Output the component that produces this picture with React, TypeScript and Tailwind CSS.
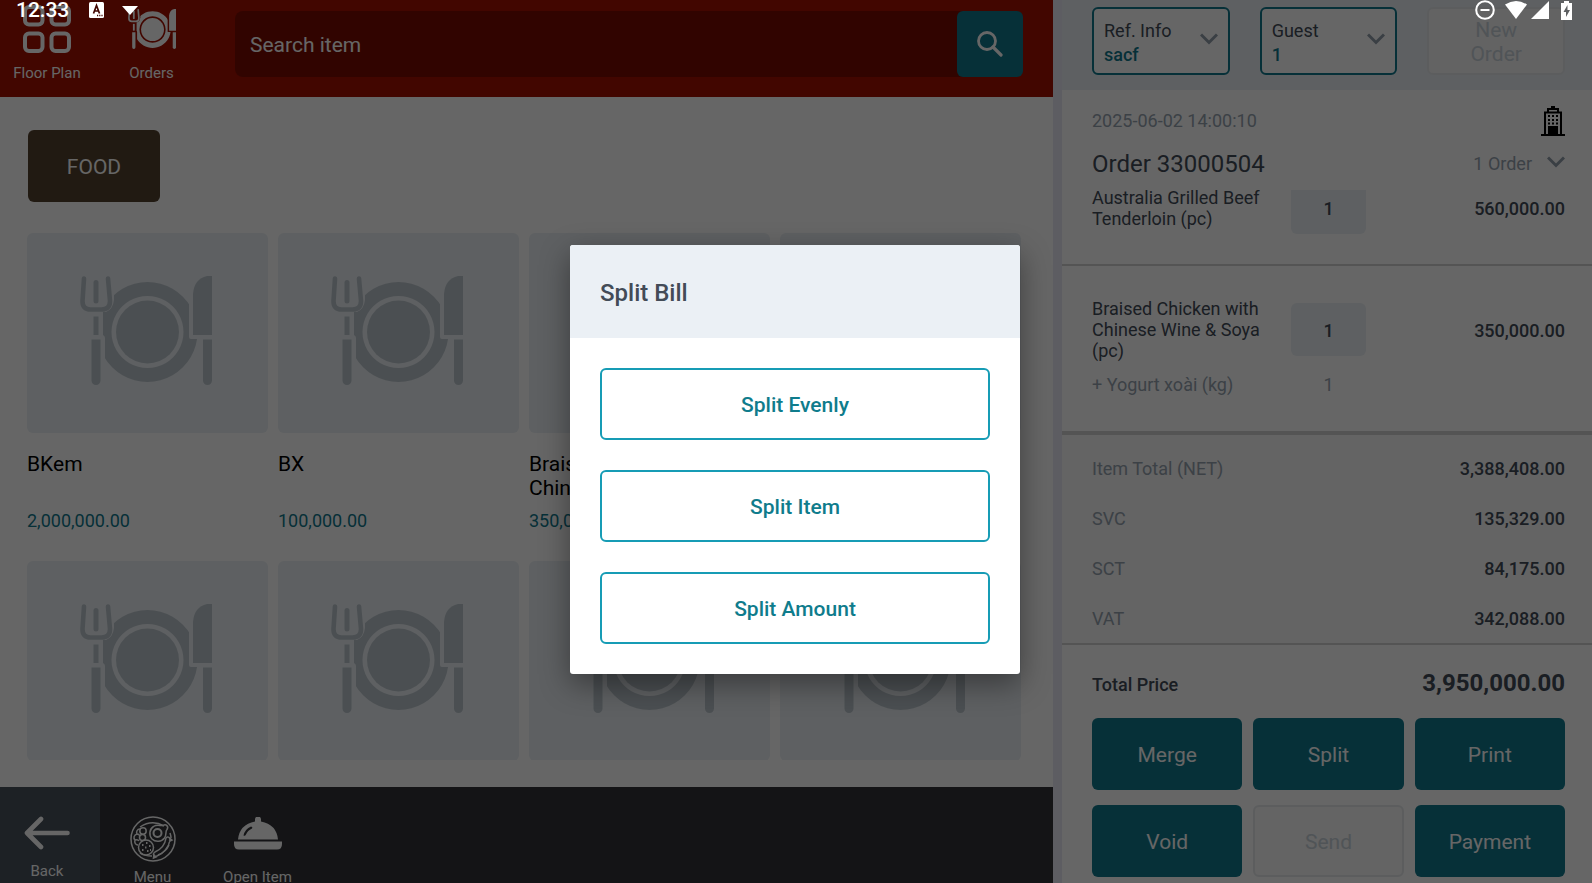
import React, { useState } from "react";

const products = [
    { name: "BKem", price: "2,000,000.00" },
    { name: "BX", price: "100,000.00" },
    { name: "Braised Chicken with Chinese Wine & Soya", price: "350,000.00" },
    { name: "", price: "" },
    { name: "", price: "" },
    { name: "", price: "" },
    { name: "", price: "" },
    { name: "", price: "" },
];

const totals = [
    { label: "Item Total (NET)", value: "3,388,408.00" },
    { label: "SVC", value: "135,329.00" },
    { label: "SCT", value: "84,175.00" },
    { label: "VAT", value: "342,088.00" },
];

const actions = ["Merge", "Split", "Print", "Void", "Send", "Payment"];
const splitOptions = ["Split Evenly", "Split Item", "Split Amount"];

/* ---------- icons ---------- */

function PlateIcon({ className }: { className: string }) {
    return (
        <svg viewBox="0 0 132 109" preserveAspectRatio="none" className={className} fill="currentColor" aria-hidden="true">
            <clipPath id="plate">
                <path d="M34 0V24Q33 33 26 36H23V59Q25 60 25 62V109H132V63H111Q109 63 109 61V0Z" />
            </clipPath>
            <g clipPath="url(#plate)">
                <path
                    fillRule="evenodd"
                    d="M67.500 6a50 50 0 1 0 .01 0ZM67.500 20a36 36 0 1 1 -.01 0Z"
                />
                <circle cx="67.500" cy="56" r="31.500" />
            </g>
            <path
                d="M4 2.500L2.500 25Q2.500 33.500 10.500 33.500H21.500Q30 33.500 30 25L28 2.500"
                fill="none"
                stroke="currentColor"
                strokeWidth="4.600"
                strokeLinecap="round"
            />
            <rect x="13.500" y="4" width="5" height="23.500" rx="2.500" />
            <rect x="13.500" y="40.500" width="5" height="18.500" />
            <path d="M11.500 63.500h9v41a4.500 4.500 0 0 1-9 0Z" />
            <path d="M113 59V18Q114 3 127 0H132V59Z" />
            <path d="M123 63.500h9v41a4.500 4.500 0 0 1-9 0Z" />
        </svg>
    );
}

function FloorPlanIcon() {
    return (
        <svg viewBox="0 0 48 48" className="size-12 shrink-0" fill="none" stroke="currentColor" strokeWidth="4" aria-hidden="true">
            <rect x="2" y="2" width="17.500" height="17.500" rx="4" />
            <rect x="28.500" y="2" width="17.500" height="17.500" rx="4" />
            <rect x="2" y="28.500" width="17.500" height="17.500" rx="4" />
            <rect x="28.500" y="28.500" width="17.500" height="17.500" rx="4" />
        </svg>
    );
}

function SearchIcon() {
    return (
        <svg viewBox="0 0 26 26" className="size-[26px]" fill="none" stroke="currentColor" strokeWidth="2.800" aria-hidden="true">
            <circle cx="10" cy="10" r="8.500" />
            <path d="M16 16l8 8" strokeWidth="3.200" strokeLinecap="round" />
        </svg>
    );
}

function ChevronIcon() {
    return (
        <svg viewBox="0 0 18 16" className="h-4 w-[18px] shrink-0" fill="none" stroke="#929faa" strokeWidth="3" aria-hidden="true">
            <path d="M1 1.500l8 8 8-8" />
        </svg>
    );
}

function BuildingIcon() {
    return (
        <svg viewBox="0 0 24 30" className="h-[30px] w-6" fill="#000" aria-hidden="true">
            <path d="M10 0h4v2h4v4h-2V4H8v2H6V2h4Z" />
            <path fillRule="evenodd" d="M3 5.500h18V28h3v2H0v-2h3ZM5 7.500V28H7v-8h10v8h2V7.500Z" />
            <path d="M11 20h2v9h-2Z" />
            <path d="M7 9h2v2H7zM11 9h2v2h-2zM15 9h2v2h-2zM7 13h2v2H7zM11 13h2v2h-2zM15 13h2v2h-2zM7 16.500h2v2H7zM11 16.500h2v2h-2zM15 16.500h2v2h-2z" />
        </svg>
    );
}

function BackIcon() {
    return (
        <svg viewBox="0 0 46 34" className="h-[34px] w-[46px] shrink-0" fill="none" stroke="currentColor" strokeWidth="4.600" strokeLinecap="round" strokeLinejoin="round" aria-hidden="true">
            <path d="M43.500 17H3M17 3L3 17l14 14" />
        </svg>
    );
}

function MenuIcon() {
    return (
        <svg viewBox="0 0 46 46" className="size-[46px] shrink-0" fill="none" stroke="currentColor" strokeWidth="1.500" aria-hidden="true">
            <circle cx="23" cy="23" r="22" />
            <path d="M10 11Q22 3 34 10M40 17Q41 20 41 22M39 29Q36 36 28 39M22 40Q14 40 10 37" />
            {/* egg */}
            <path d="M33 9.500c3-2 6 1 4 4-2 2 0 5-2.500 8.500-3 4-9 4.500-12.500 1-3.500-4-2.500-10 1.500-12.500 3.500-2.500 7-.5 9.500-1Z" />
            <circle cx="27.500" cy="17" r="4" strokeWidth="2" />
            {/* peas and salad */}
            <circle cx="13" cy="15" r="3.200" />
            <circle cx="12.500" cy="21.500" r="3" />
            <path d="M10 13c-3 0-4 3-3 5-3 1-4 4-2 6-1 3 1 5 3 5M7 18q2 0 3 2M5 24q3-1 4 1" />
            {/* cutlet */}
            <circle cx="16" cy="31.500" r="7.500" />
            <path d="M12 29h1.500M16 27h1.500M19 30h1.500M15 31.500h1.500M12 34h1.500M17 35h1.500M20 34h1" strokeWidth="1.800" />
            {/* sausage */}
            <path d="M36 22c-1 7-4 11-11 14-3 2-1 5 2 4 6-2 12-9 13-16 0-3-3-4-4-2ZM38.500 21l3.500 3-3 1.500M24 38l-.5 4 3.500-1.500" />
        </svg>
    );
}

function ClocheIcon() {
    return (
        <svg viewBox="0 0 48 33" className="h-[33px] w-12 shrink-0" fill="currentColor" aria-hidden="true">
            <path
                fillRule="evenodd"
                d="M21 2.500a3 3 0 0 1 6 0V4.500Q42.500 7.500 44 22.500H4Q5.500 7.500 21 4.500ZM9.500 18.500Q11 19.500 12 17.500 13.500 13.500 18 11.500 19 10 17 9.500 11 12 9.500 18.500Z"
            />
            <path d="M0 24.500h48v2.500q0 5.500-5 5.500H5Q0 32.500 0 27Z" />
        </svg>
    );
}

/* ---------- pieces ---------- */

function StatusBar() {
    return (
        <div className="absolute inset-x-0 top-0 flex h-5 items-center justify-between pr-5 pl-4 text-white">
            <div className="flex items-center">
                <span className="text-[21px] leading-5 font-medium">12:33</span>
                <svg viewBox="0 0 15 16" className="ml-5 h-4 w-[15px]" aria-hidden="true">
                    <rect width="15" height="16" rx="1.500" fill="#fff" />
                    <path d="M4.500 11.500L7.500 3.500l3 8M5.500 9h4" fill="none" stroke="#420600" strokeWidth="1.700" />
                    <path d="M8 13.500h1.200M10.200 13.500h1.200M12.400 13.500h1.200" stroke="#420600" strokeWidth="1.300" />
                </svg>
                <svg viewBox="0 0 16 9" className="ml-[18px] h-[9px] w-4" fill="#fff" aria-hidden="true">
                    <path d="M0 0h16L8 9Z" />
                </svg>
            </div>
            <div className="flex items-center">
                <svg viewBox="0 0 20 20" className="size-5" fill="none" stroke="#fff" strokeWidth="2" aria-hidden="true">
                    <circle cx="10" cy="10" r="8.800" />
                    <path d="M5.500 10h9" />
                </svg>
                <svg viewBox="0 0 22 18" className="ml-[10px] h-[18px] w-[22px]" fill="#fff" aria-hidden="true">
                    <path d="M0 3.500Q11-3.500 22 3.500L11 18Z" />
                </svg>
                <svg viewBox="0 0 18 18" className="ml-1 size-[18px]" fill="#fff" aria-hidden="true">
                    <path d="M18 0v18H0Z" />
                </svg>
                <svg viewBox="0 0 11 19" className="ml-3 h-[19px] w-[11px]" aria-hidden="true">
                    <path d="M3 0h5v2h3v17H0V2h3Z" fill="#fff" />
                    <path d="M6.500 4L2.500 11h2.500v5l4-7H6.500Z" fill="#5e6062" />
                </svg>
            </div>
        </div>
    );
}

function InfoSelect({ label, value }: { label: string; value: string }) {
    return (
        <label className="flex h-[68px] items-center justify-between rounded-md border-2 border-[#0f788c] bg-white px-[10px] text-lg leading-6">
            <span className="min-w-0 flex-1 pt-1 text-[#434b57]">
                {label}
                <select className="block w-full appearance-none bg-transparent font-medium text-[#0f788c] opacity-100">
                    <option>{value}</option>
                </select>
            </span>
            <ChevronIcon />
        </label>
    );
}

function OrderLine({ name, qty, price }: { name: string; qty: string; price: string }) {
    return (
        <div className="flex items-center">
            <div className="w-[199px] shrink-0 pr-5 leading-[21px]">{name}</div>
            <div className="flex h-[53px] w-[75px] shrink-0 items-center justify-center rounded-md bg-[#ebf0f5] pt-0.5 font-medium">
                {qty}
            </div>
            <div className="flex-1 pt-0.5 text-right font-medium">{price}</div>
        </div>
    );
}

export default function App() {
    const [query, setQuery] = useState("");
    const [open, setOpen] = useState(true);

    return (
        <div className="relative h-screen overflow-hidden bg-white font-[Roboto,sans-serif]">
            <div className="grid h-full grid-cols-[minmax(0,1fr)_539px]">
                {/* CATALOG */}
                <main className="flex h-full min-h-0 flex-col">
                    <header className="flex h-[97px] shrink-0 bg-[#a50f00] text-[15px] leading-5 text-white">
                        <button className="flex w-[100px] flex-col items-center justify-end pr-[6px] pb-[14px]">
                            <FloorPlanIcon />
                            <span className="mt-[10px]">Floor Plan</span>
                        </button>
                        <button className="flex w-[105px] flex-col items-center justify-end pr-0.5 pb-[14px]">
                            <PlateIcon className="h-10 w-12" />
                            <span className="mt-[14px]">Orders</span>
                        </button>
                        <form className="mx-[30px] mt-[11px] flex h-[66px] flex-1 rounded-lg bg-[#7b0c00]" onSubmit={(e) => e.preventDefault()}>
                            <input
                                type="text"
                                aria-label="Search item"
                                placeholder="Search item"
                                value={query}
                                onChange={(e) => setQuery(e.target.value)}
                                className="min-w-0 flex-1 px-[15px] pt-0.5 text-[21px] outline-none placeholder:text-white"
                            />
                            <button aria-label="Search" className="flex w-[66px] items-center justify-center rounded-md bg-[#0f788c]">
                                <SearchIcon />
                            </button>
                        </form>
                    </header>

                    <div className="mb-[27px] min-h-0 flex-1 overflow-hidden pt-[33px] pr-8 pl-[27px]">
                        <button className="ml-px h-[72px] w-[132px] rounded-md bg-[#53412d] pt-[3px] text-[21px] text-white">FOOD</button>
                        <div className="mt-[31px] grid grid-cols-4 gap-x-[10px] gap-y-7">
                            {products.map((p, i) => (
                                <div key={i}>
                                    <div className="flex h-[200px] items-center justify-center rounded-md bg-[#ebf0f5] pr-1 pb-[6px] text-[#bcc6cd]">
                                        <PlateIcon className="h-[109px] w-[132px]" />
                                    </div>
                                    <div className="mt-[19px] h-12 text-[21px] leading-6 text-black">{p.name}</div>
                                    <div className="mt-[9px] h-6 text-lg leading-6 text-[#0f788c]">{p.price}</div>
                                </div>
                            ))}
                        </div>
                    </div>

                    <footer className="flex h-24 shrink-0 overflow-hidden bg-[#323439] text-[15px] leading-5 text-white">
                        <button className="flex w-[100px] flex-col items-center justify-start bg-[#49535d] pt-[29px] pr-[6px]">
                            <BackIcon />
                            <span className="mt-[11px]">Back</span>
                        </button>
                        <button className="flex w-[105px] flex-col items-center justify-start pt-[29px]">
                            <MenuIcon />
                            <span className="mt-[5px]">Menu</span>
                        </button>
                        <button className="flex w-[105px] flex-col items-center justify-start pt-[30px]">
                            <ClocheIcon />
                            <span className="mt-[17px]">Open Item</span>
                        </button>
                    </footer>
                </main>

                {/* ORDER */}
                <aside className="flex h-full min-h-0 flex-col border-l-[9px] border-[#e8e8f5] text-lg leading-6 text-[#434b57]">
                    <div className="grid h-[90px] shrink-0 grid-cols-3 gap-[30px] bg-[#ebf0f5] pt-[7px] pr-[27px] pl-[30px]">
                        <InfoSelect label="Ref. Info" value="sacf" />
                        <InfoSelect label="Guest" value="1" />
                        <button disabled className="h-[68px] rounded-md border-2 border-[#e6e9ec] bg-[#f7f7f7] px-5 pt-0.5 text-[21px] leading-6 text-[#c8d2da]">
                            New Order
                        </button>
                    </div>

                    <div className="shrink-0 pt-4 pr-[27px] pb-[10px] pl-[30px]">
                        <div className="flex h-[30px] items-center justify-between text-[#96a3af]">
                            <span>2025-06-02 14:00:10</span>
                            <BuildingIcon />
                        </div>
                        <div className="mt-3 flex h-8 items-center justify-between">
                            <h1 className="text-2xl">Order 33000504</h1>
                            <button className="flex items-center gap-[15px] text-[#96a3af]">
                                1 Order
                                <ChevronIcon />
                            </button>
                        </div>
                    </div>

                    <div className="min-h-0 flex-1 overflow-hidden">
                        {/* list is scrolled a little, the first line is cut at the top */}
                        <div className="-mt-[9px] border-b-2 border-[#d2d2d2] pr-[27px] pb-[30px] pl-[30px]">
                            <OrderLine name="Australia Grilled Beef Tenderloin (pc)" qty="1" price="560,000.00" />
                        </div>
                        <div className="pt-8 pr-[27px] pl-[30px]">
                            <OrderLine name="Braised Chicken with Chinese Wine & Soya (pc)" qty="1" price="350,000.00" />
                            <div className="mt-3 flex text-[#96a3af]">
                                <span className="w-[199px]">+ Yogurt xoài (kg)</span>
                                <span className="w-[75px] text-center">1</span>
                            </div>
                        </div>
                    </div>

                    <dl className="shrink-0 border-t-4 border-b-2 border-[#d2d2d2] bg-[#f9f9f9] pt-2 pr-[27px] pl-[30px]">
                        {totals.map((t) => (
                            <div key={t.label} className="flex h-[50px] items-center justify-between pt-0.5">
                                <dt className="text-[#96a3af]">{t.label}</dt>
                                <dd className="font-medium">{t.value}</dd>
                            </div>
                        ))}
                    </dl>

                    <div className="shrink-0 pt-[22px] pr-[27px] pb-[6px] pl-[30px]">
                        <div className="flex items-baseline justify-between font-medium">
                            <span>Total Price</span>
                            <span className="text-2xl font-bold">3,950,000.00</span>
                        </div>
                        <div className="mt-[19px] grid grid-cols-3 gap-x-[11px] gap-y-[15px] text-[21px]">
                            {actions.map((a) => (
                                <button
                                    key={a}
                                    disabled={a === "Send"}
                                    onClick={() => a === "Split" && setOpen(true)}
                                    className="h-[72px] rounded-md bg-[#0f788c] pt-0.5 text-white disabled:border-2 disabled:border-[#e6e9ec] disabled:bg-[#f9f9f9] disabled:text-[#c8d2da]"
                                >
                                    {a}
                                </button>
                            ))}
                        </div>
                    </div>
                </aside>
            </div>

            {/* SPLIT BILL DIALOG */}
            {open && (
                <div className="absolute inset-0 flex items-center justify-center bg-black/60 pt-9 pr-0.5">
                    <div role="dialog" aria-labelledby="split-title" className="w-[450px] overflow-hidden rounded-[3px] bg-white shadow-[0_10px_30px_rgba(0,0,0,0.4)]">
                        <h2 id="split-title" className="flex h-[93px] items-center bg-[#ebf0f5] px-[30px] pt-0.5 text-2xl font-medium text-[#434b57]">
                            Split Bill
                        </h2>
                        <div className="flex flex-col gap-[30px] p-[30px]">
                            {splitOptions.map((o) => (
                                <button
                                    key={o}
                                    onClick={() => setOpen(false)}
                                    className="h-[72px] rounded-md border-2 border-[#179cb5] bg-white pt-[3px] text-[21px] font-medium text-[#0f7c8c]"
                                >
                                    {o}
                                </button>
                            ))}
                        </div>
                    </div>
                </div>
            )}

            <StatusBar />
        </div>
    );
}
